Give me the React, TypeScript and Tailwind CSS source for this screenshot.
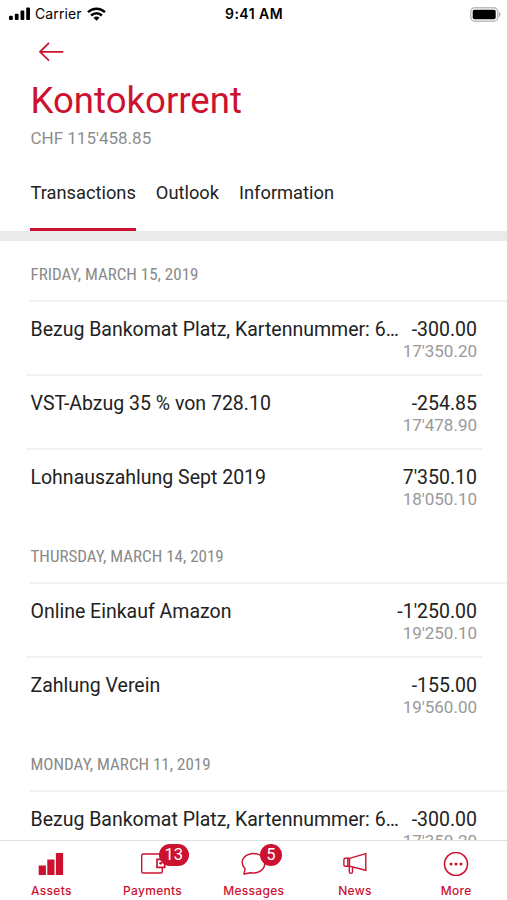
import React from 'react';

type Transaction = { title: string; amount: string; balance: string };
type Day = { date: string; items: Transaction[] };

const days: Day[] = [
  {
    date: 'FRIDAY, MARCH 15, 2019',
    items: [
      { title: 'Bezug Bankomat Platz, Kartennummer: 6…', amount: '-300.00', balance: "17'350.20" },
      { title: 'VST-Abzug 35 % von 728.10', amount: '-254.85', balance: "17'478.90" },
      { title: 'Lohnauszahlung Sept 2019', amount: "7'350.10", balance: "18'050.10" },
    ],
  },
  {
    date: 'THURSDAY, MARCH 14, 2019',
    items: [
      { title: 'Online Einkauf Amazon', amount: "-1'250.00", balance: "19'250.10" },
      { title: 'Zahlung Verein', amount: '-155.00', balance: "19'560.00" },
    ],
  },
  {
    date: 'MONDAY, MARCH 11, 2019',
    items: [{ title: 'Bezug Bankomat Platz, Kartennummer: 6…', amount: '-300.00', balance: "17'350.20" }],
  },
];

function StatusBar() {
  return (
    <div className="flex h-7 shrink-0 items-center pl-[9px] pr-[6px] font-['Inter',sans-serif] text-black">
      <div className="flex w-[216px] items-center">
        <svg width="22" height="14" viewBox="0 0 22 14" fill="currentColor">
          <rect x="0" y="8.8" width="3.8" height="4.2" rx="1" />
          <rect x="5.8" y="6.7" width="3.8" height="6.3" rx="1" />
          <rect x="11.5" y="3.6" width="3.8" height="9.4" rx="1" />
          <rect x="17.2" y="0.5" width="3.8" height="12.5" rx="1" />
        </svg>
        <span className="ml-1 text-[14px] leading-7 tracking-[0.1px]">Carrier</span>
        <svg className="ml-[5px]" width="19" height="14" viewBox="0 0 19 14" fill="none" stroke="currentColor" strokeWidth="2.5">
          <path d="M1 5.2C5.8.6 13.2.6 18 5.2" />
          <path d="M4.1 8.5c3.1-3 7.7-3 10.8 0" />
          <path d="M9.5 13.7l-3-3c1.7-1.5 4.3-1.5 6 0z" fill="currentColor" stroke="none" />
        </svg>
      </div>
      <span className="text-[14px] font-semibold leading-7 tracking-[0.45px]">9:41 AM</span>
      <svg className="ml-auto" width="31" height="15" viewBox="0 0 31 15">
        <rect x="0.75" y="0.75" width="27" height="13.5" rx="4" fill="white" stroke="#bdbdbd" strokeWidth="1.5" />
        <rect x="2.7" y="2.8" width="23" height="9.4" rx="1.8" fill="black" />
        <path d="M29 5c2 .8 2 4.2 0 5z" fill="#aaa" />
      </svg>
    </div>
  );
}

function Row({ item, last }: { item: Transaction; last: boolean }) {
  return (
    <div className="ml-[26px] mr-[25px]">
      <div className={`flex h-[74px] items-start justify-between border-b-2 pl-[4.5px] pr-[5px] pt-4 ${last ? 'border-transparent' : 'border-[#f1f1f1]'}`}>
        <span className="whitespace-nowrap text-[19.5px] leading-6">{item.title}</span>
        <div className="flex flex-col items-end">
          <span className="text-[19.5px] leading-6">{item.amount}</span>
          <span className="-mt-px text-[17px] leading-5 text-[#999]">{item.balance}</span>
        </div>
      </div>
    </div>
  );
}

function Badge({ children }: { children: React.ReactNode }) {
  return (
    <span className="absolute left-[19px] top-[-8px] flex h-[22px] min-w-[22px] items-center justify-center rounded-full bg-[#cc1230] px-[6px] text-[16.5px] leading-none text-white">
      {children}
    </span>
  );
}

function Tab({ label, badge, children }: { label: string; badge?: string; children: React.ReactNode }) {
  return (
    <div className="flex w-[101.2px] flex-col items-center pt-[11px]">
      <div className="relative h-6 w-[26px]">
        <svg width="26" height="24" viewBox="0 0 26 24" fill="none" stroke="currentColor" strokeWidth="1.4">
          {children}
        </svg>
        {badge && <Badge>{badge}</Badge>}
      </div>
      <span className="mt-[7px] font-['Inter',sans-serif] text-[12px] font-medium leading-4 tracking-[0.3px]">{label}</span>
    </div>
  );
}

export default function App() {
  return (
    <div className="flex h-[900px] w-[507px] flex-col overflow-hidden bg-white font-['Roboto',sans-serif] text-[#222]">
      <StatusBar />
      <header className="flex h-[203px] shrink-0 flex-col px-[30px] pt-[14px]">
        <svg className="ml-[9px] shrink-0 text-[#cc1230]" width="25" height="20" viewBox="0 0 25 20" fill="none" stroke="currentColor" strokeWidth="1.7">
          <path d="M24.3 9.8H1M10 .9L1 9.8l9 8.9" />
        </svg>
        <h1 className="ml-[0.5px] mt-4 text-[36.6px] leading-[46px] text-[#cc1230]">Kontokorrent</h1>
        <p className="ml-[0.5px] mt-1 text-[17px] leading-5 text-[#8c8c8c]">CHF 115'458.85</p>
        <nav className="mt-auto flex gap-5 pl-[0.4px] text-[18.3px] leading-6">
          <span className="h-[50px] border-b-[3px] border-[#cc1230]">Transactions</span>
          <span>Outlook</span>
          <span>Information</span>
        </nav>
      </header>
      <div className="h-[10px] shrink-0 bg-[#ebeaeb]" />
      <main className="h-[599px] shrink-0 overflow-hidden pt-px">
        {days.map((day) => (
          <section key={day.date}>
            <h2 className="ml-[30px] flex h-[60px] items-center border-b-2 border-[#f1f1f1] pl-[0.5px] pt-2 font-['Roboto_Condensed','Roboto',sans-serif] text-[17px] text-[#8a8a8a] [font-stretch:75%]">
              {day.date}
            </h2>
            {day.items.map((item, i) => (
              <Row key={i} item={item} last={i === day.items.length - 1} />
            ))}
          </section>
        ))}
      </main>
      <footer className="flex h-[60px] shrink-0 border-t border-[#dedede] bg-white pl-[0.8px] text-[#cc1230]">
        <Tab label="Assets">
          <path d="M.7 13.5h7.2V23H.7zM9.300 7.500h7.200V23H9.300zM17.900 1h7.200v22h-7.200z" fill="currentColor" stroke="none" />
        </Tab>
        <Tab label="Payments" badge="13">
          <path d="M22.300 7V3a1 1 0 0 0-1-1H3.300a1.600 1.600 0 0 0-1.600 1.600v15.800A1.600 1.600 0 0 0 3.300 21h17.500a1.600 1.600 0 0 0 1.500-1.600V15.300" />
          <path d="M17 7.300h7.700v8H17z" strokeWidth="1.700" />
          <circle cx="20.700" cy="11.300" r="1.400" fill="currentColor" stroke="none" />
        </Tab>
        <Tab label="Messages" badge="5">
          <path d="M3 22l1.100-5.300C-.4 12.300.4 6.300 5.600 3.300c7.200-4.200 18-.6 18.200 7.700.2 7.200-7.400 11.200-14.300 9.700z" strokeLinejoin="round" />
        </Tab>
        <Tab label="News">
          <path d="M7.500 6.300L23.800 1.700v16.600L7.500 14.300zM7.500 6.300H3.200a1.300 1.300 0 0 0-1.300 1.300V13a1.300 1.300 0 0 0 1.300 1.300h4.300M5.800 6.300v8" />
          <path d="M7.300 14.500v5.300a1.600 1.600 0 0 0 3.200 0V15.200" />
        </Tab>
        <Tab label="More">
          <circle cx="13" cy="12" r="11.500" strokeWidth="1.600" />
          <g fill="currentColor" stroke="none"><circle cx="8" cy="12" r="1.500" /><circle cx="13" cy="12" r="1.500" /><circle cx="18" cy="12" r="1.500" /></g>
        </Tab>
      </footer>
    </div>
  );
}
